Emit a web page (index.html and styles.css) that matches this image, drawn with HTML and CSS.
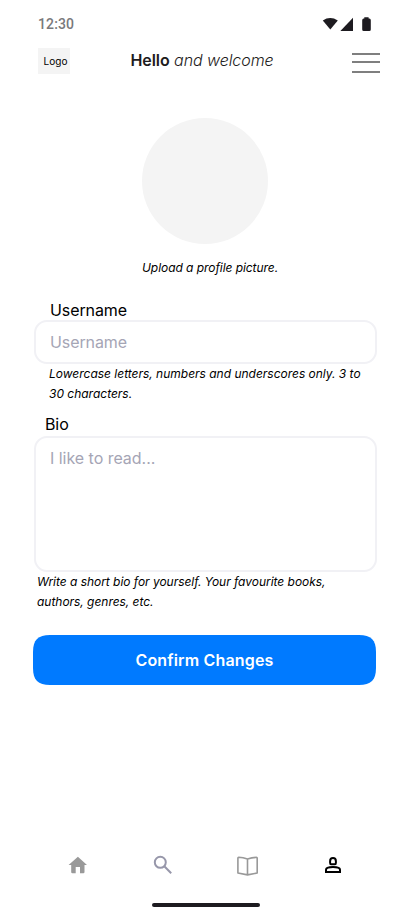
FILE: index.html
```html
<!DOCTYPE html>
<html lang="en">
<head>
<meta charset="utf-8">
<title>Edit profile</title>
<link rel="stylesheet" href="styles.css">
</head>
<body>
<div class="screen">
  <div class="status">
    <span class="time">12:30</span>
    <svg class="status-icons" width="50" height="16" viewBox="322 16 50 16" fill="#1d1b20">
      <path d="M322.8 20.4Q330.2 15.6 337.8 20.4L330.3 29.6Z"/>
      <path d="M353 17.8V30.9H340.4Z"/>
      <path d="M364.3 18.6V17.2H368.6V18.6H369.3Q370.8 18.9 370.8 20.3V29.4Q370.8 31 369.3 31H363.7Q362.2 31 362.2 29.4V20.3Q362.2 18.9 363.7 18.6Z"/>
    </svg>
  </div>
  <header class="header">
    <div class="logo">Logo</div>
    <h1 class="greeting"><b>Hello</b> <i>and welcome</i></h1>
    <svg class="menu" width="28" height="22" viewBox="0 0 28 22" stroke="#7f7f7f" stroke-width="2">
      <path d="M0 2H28M0 10H28M0 20H28"/>
    </svg>
  </header>
  <main class="content">
    <div class="avatar"></div>
    <p class="hint upload-hint">Upload a profile picture.</p>
    <label class="label" for="username">Username</label>
    <input class="field" id="username" placeholder="Username">
    <p class="hint username-hint">Lowercase letters, numbers and underscores only. 3 to<br>30 characters.</p>
    <label class="label bio-label" for="bio">Bio</label>
    <textarea class="field bio" id="bio" placeholder="I like to read..."></textarea>
    <p class="hint bio-hint">Write a short bio for yourself. Your favourite books,<br>authors, genres, etc.</p>
    <div class="confirm-wrap">
      <svg class="confirm-shape" width="343" height="50" viewBox="0 0 343 50" fill="#007aff"><path d="M17 0H326C338 0 343 5 343 17V33C343 45 338 50 326 50H17C5 50 0 45 0 33V17C0 5 5 0 17 0Z"/></svg>
      <button class="confirm">Confirm Changes</button>
    </div>
  </main>
  <nav class="tabs">
    <svg width="24" height="24" viewBox="0 0 24 24" fill="#999"><path d="M11.900 2.800 21 11H18.500V18Q18.500 19.200 17.300 19.200H14V13H9.700V19.200H6.400Q5.200 19.200 5.200 18V11H2.600Z"/></svg>
    <svg width="24" height="24" viewBox="0 0 24 24" fill="none" stroke="#9797aa" stroke-width="2"><circle cx="9.300" cy="8.300" r="5.500"/><path d="M13.300 12.300 20.200 19.200"/></svg>
    <svg width="24" height="24" viewBox="0 0 24 24" fill="none" stroke="#999" stroke-width="1.600" stroke-linejoin="round"><path d="M11.500 5Q7 3.600 2.700 3.300Q1.900 3.300 1.900 4.100V19L11.500 20.900L21.200 19V4.100Q21.200 3.300 20.400 3.300Q16 3.600 11.500 5V20.900"/></svg>
    <svg width="24" height="24" viewBox="0 0 24 24" fill="none" stroke="#000" stroke-width="2"><path d="M10 10.200H14Q14.900 10.200 14.900 8.700V7.200Q14.900 4 12 4T9.100 7.200V8.700Q9.100 10.200 10 10.200ZM5 18V15.800C5 12.200 19 12.200 19 15.800V18Z"/></svg>
  </nav>
  <div class="home-bar"></div>
</div>
</body>
</html>
```
FILE: styles.css
```css
* { box-sizing: border-box; }
body { margin: 0; background: #fff; color: #000; font-family: Inter, sans-serif; }
.screen { width: 412px; height: 917px; display: flex; flex-direction: column; }
.status { height: 48px; padding: 16px 40px 0 38px; display: flex; justify-content: space-between; }
.time { font: 500 14px/16px Roboto, sans-serif; color: #79797b; letter-spacing: .14px; }
.header { height: 26px; margin: 0 32px 0 38px; display: flex; justify-content: space-between; align-items: center; }
.logo { width: 32px; height: 26px; padding-left: 3px; background: #f4f4f4; font-size: 10px; line-height: 27px; text-align: center; }
.greeting { margin: -2px 0 0 -18px; font-size: 16px; line-height: 24px; font-weight: 300; letter-spacing: -.07px; color: #1d1b20; white-space: nowrap; }
.greeting b { font-weight: 600; }
.menu { margin-top: 3px; }
.content { display: flex; flex-direction: column; }
.avatar { width: 126px; height: 126px; margin: 44px 0 0 142px; border-radius: 50%; background: #f4f4f4; }
.hint { margin: 0; font-size: 12px; line-height: 20px; letter-spacing: -.03px; font-style: italic; white-space: nowrap; }
.upload-hint { margin: 14px 0 0 142px; letter-spacing: -.06px; }
.label { margin: 22px 0 0 50px; height: 20px; font-size: 16px; line-height: 20px; letter-spacing: -.1px; }
.field { width: 343px; height: 44px; margin-left: 34px; padding: 0 14px; border: 2px solid #f1f1f5; border-radius: 13px; background: #fff; outline: 0; resize: none; font: 16px/20px Inter, sans-serif; letter-spacing: -.1px; }
.field::placeholder { color: #a5a5b5; opacity: 1; }
.username-hint { margin-left: 49px; letter-spacing: -.01px; }
.bio-label { margin: 10px 0 0 45px; height: 22px; }
.bio { height: 136px; padding-top: 10px; letter-spacing: -.03px; }
.bio-hint { margin-left: 37px; }
.confirm-wrap { width: 343px; height: 50px; margin: 23px 0 0 33px; display: grid; }
.confirm-shape, .confirm { grid-area: 1 / 1; }
.confirm { width: 343px; height: 50px; padding: 0; border: 0; background: transparent; color: #fff; font: 600 16px/24px Inter, sans-serif; letter-spacing: .16px; z-index: 1; }
.tabs { height: 24px; margin: auto 67px 0 66px; display: flex; justify-content: space-between; }
.home-bar { width: 108px; height: 4px; margin: 25px 0 10px 152px; border-radius: 2px; background: #1d1b20; }
```
